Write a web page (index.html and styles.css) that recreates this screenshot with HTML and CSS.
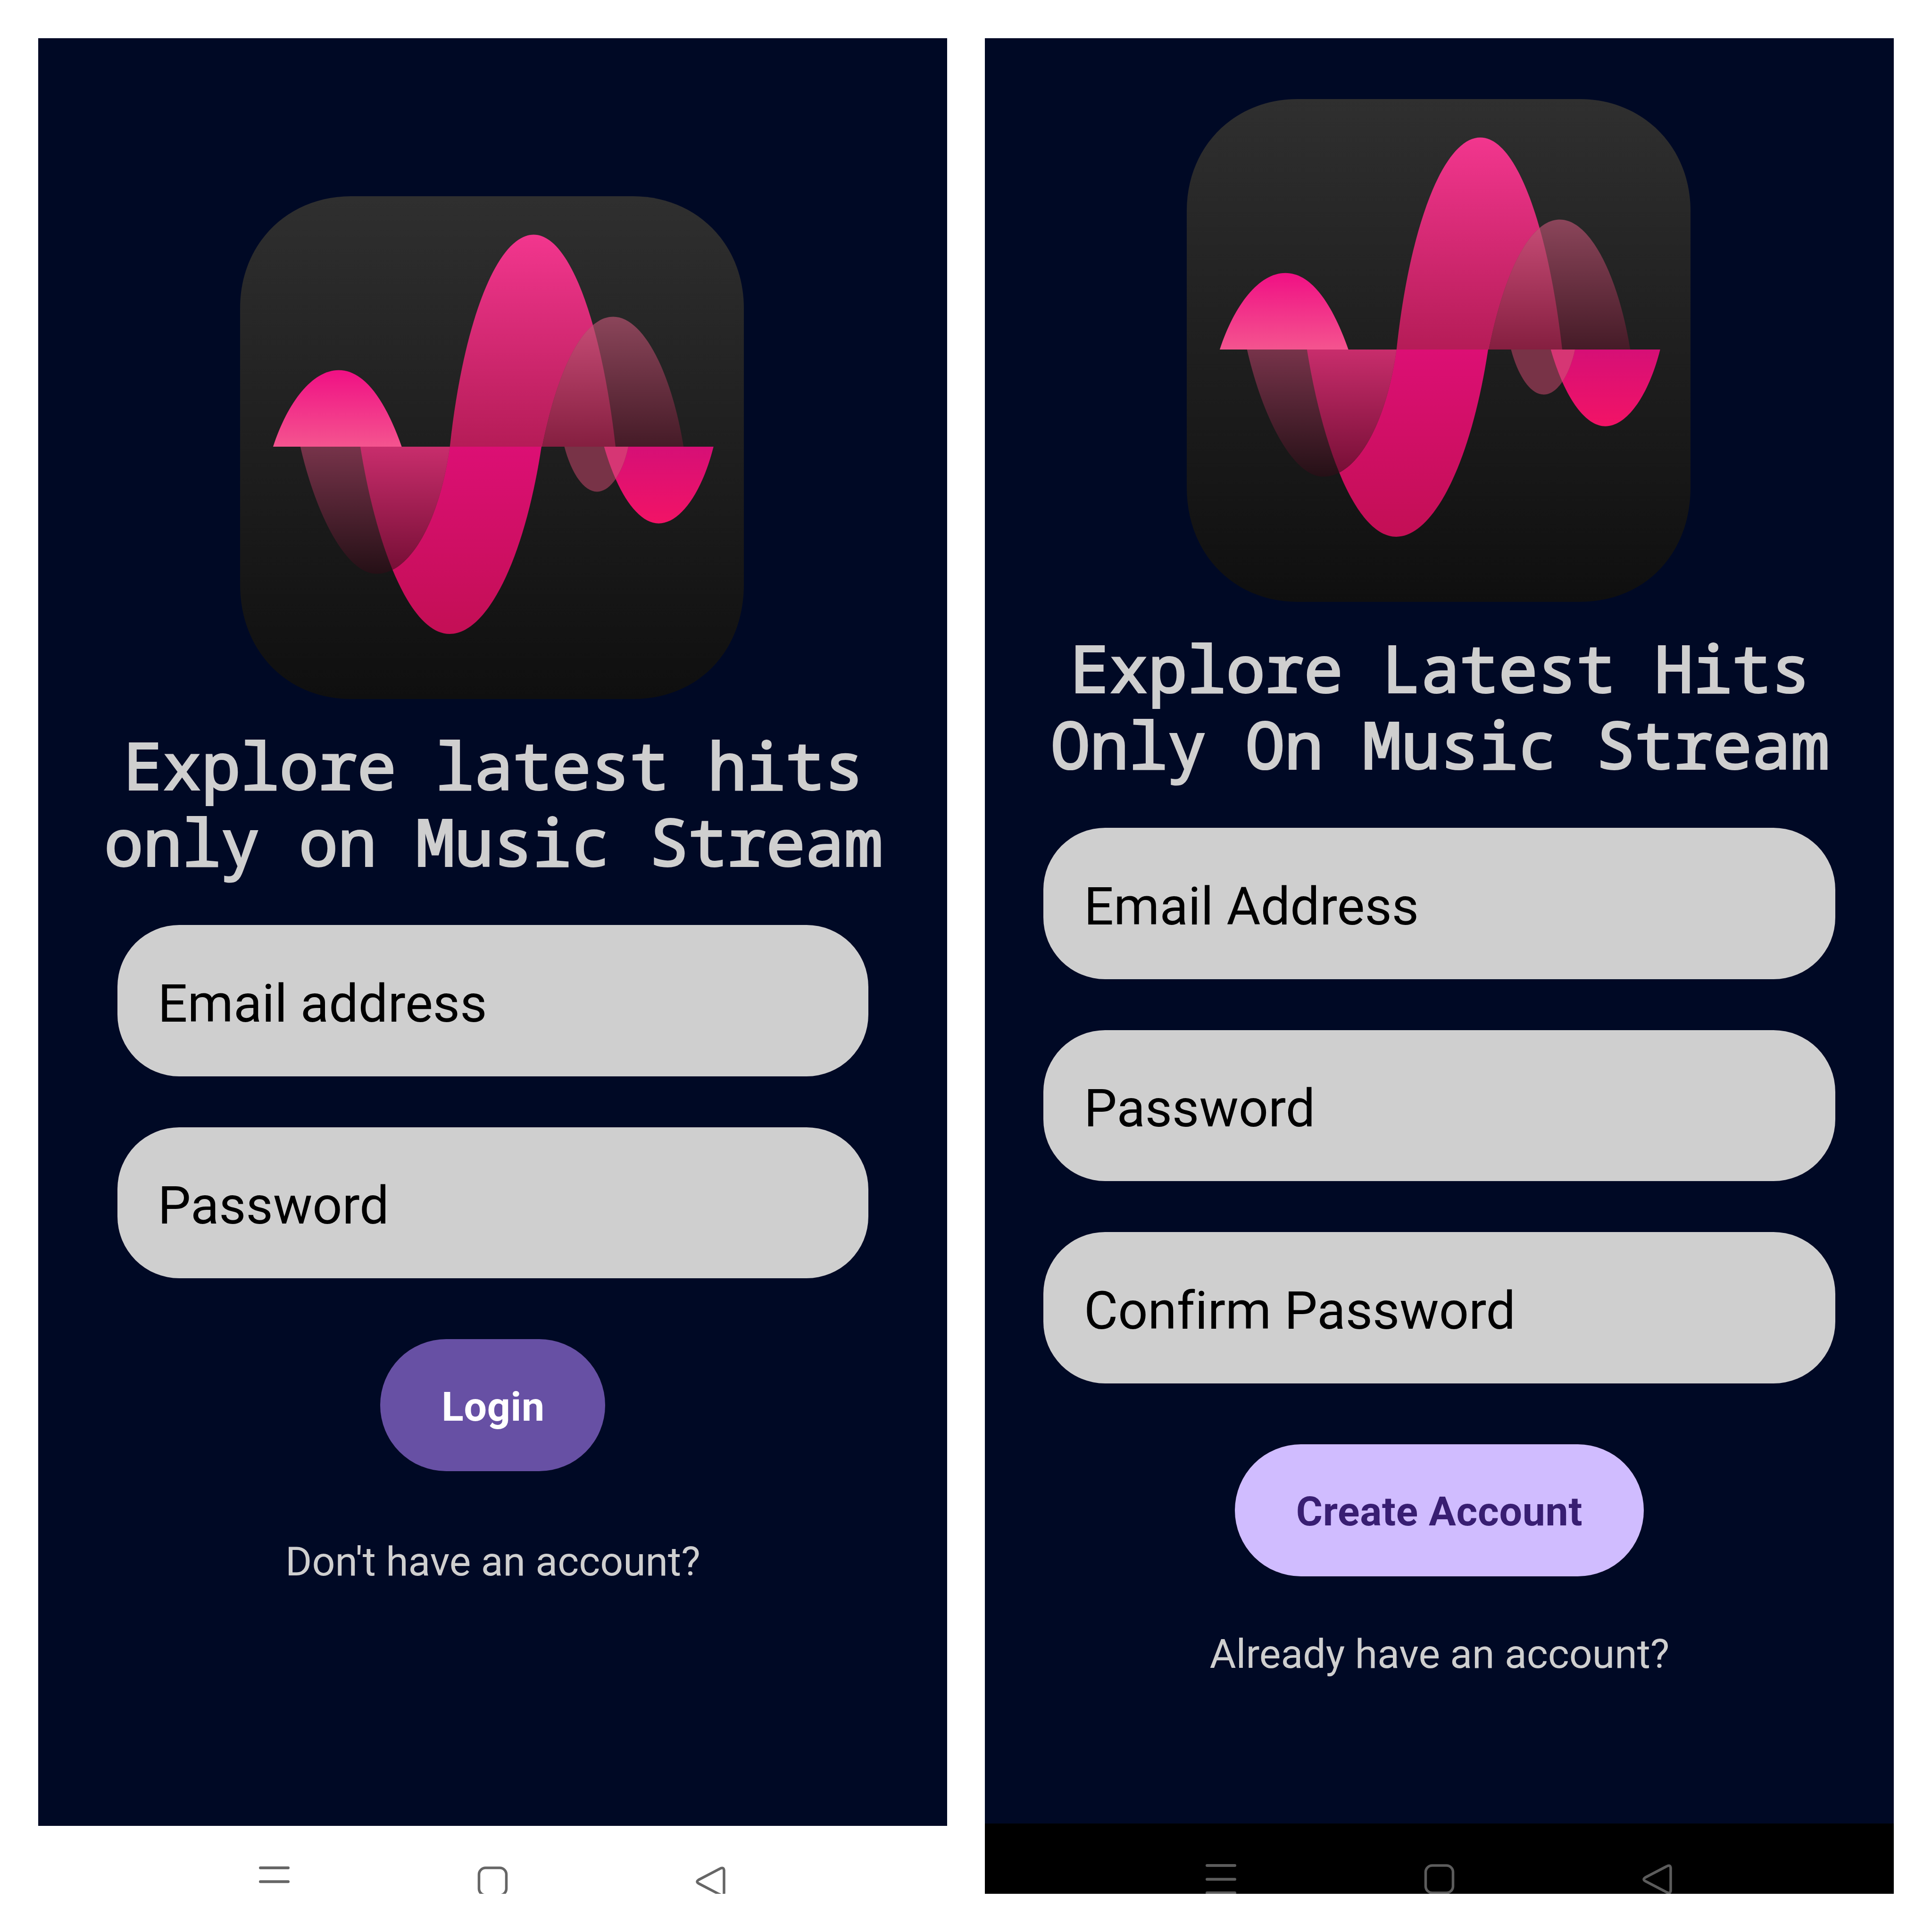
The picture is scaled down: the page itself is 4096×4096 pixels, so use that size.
FILE: index.html
```html
<!DOCTYPE html>
<html lang="en">
<head>
<meta charset="utf-8">
<title>Music Stream</title>
<link rel="stylesheet" href="styles.css">
</head>
<body>
<svg class="defs" aria-hidden="true">
  <defs>
    <linearGradient id="tile" x1="0" y1="0" x2="0" y2="1"><stop offset="0" stop-color="#2f2f2f"/><stop offset="0.45" stop-color="#202020"/><stop offset="1" stop-color="#0f0f0f"/></linearGradient>
    <linearGradient id="hump" x1="0" y1="0" x2="0" y2="1"><stop offset="0" stop-color="#f01084"/><stop offset="1" stop-color="#f4548f"/></linearGradient>
    <linearGradient id="crest" x1="0" y1="0" x2="0" y2="1"><stop offset="0" stop-color="#f2368e"/><stop offset="1" stop-color="#b51c57"/></linearGradient>
    <linearGradient id="trough" x1="0" y1="0" x2="0" y2="1"><stop offset="0" stop-color="#dc0f74"/><stop offset="1" stop-color="#c30f55"/></linearGradient>
    <linearGradient id="shadeDown" x1="0" y1="0" x2="0" y2="1"><stop offset="0" stop-color="#77334a"/><stop offset="1" stop-color="#251016"/></linearGradient>
    <linearGradient id="mixDown" x1="0" y1="0" x2="0" y2="1"><stop offset="0" stop-color="#c82d6c"/><stop offset="1" stop-color="#740e34"/></linearGradient>
    <linearGradient id="shadeUp" x1="0" y1="0" x2="0" y2="1"><stop offset="0" stop-color="#8b455a"/><stop offset="1" stop-color="#451b27"/></linearGradient>
    <linearGradient id="mixUp" x1="0" y1="0" x2="0" y2="1"><stop offset="0" stop-color="#c84d77"/><stop offset="1" stop-color="#851f40"/></linearGradient>
    <linearGradient id="tail" x1="0" y1="0" x2="0" y2="1"><stop offset="0" stop-color="#d60f76"/><stop offset="1" stop-color="#f21366"/></linearGradient>
    <path id="crestPath" d="M663 787C702 420 802 152 912 152C1022 152 1115 430 1155 787Z"/>
    <path id="troughPath" d="M397 787C445 1090 545 1348 662 1348C775 1348 885 1120 935 787Z"/>
    <path id="tailPath" d="M1121 787C1160 925 1221 1017 1283 1017C1345 1017 1410 930 1446 787Z"/>
    <clipPath id="inCrest"><use href="#crestPath"/></clipPath>
    <clipPath id="inTrough"><use href="#troughPath"/></clipPath>
    <clipPath id="inTail"><use href="#tailPath"/></clipPath>
  </defs>
  <symbol id="logo" viewBox="40 37 1496 1506" preserveAspectRatio="none">
    <path fill="url(#tile)" d="M370 37H1206C1395 37 1536 180 1536 372V1200C1536 1400 1400 1543 1206 1543H370C180 1543 40 1400 40 1200V372C40 180 180 37 370 37Z"/>
    <path fill="url(#hump)" d="M138 787C181 655 254 558 333 558C408 558 470 645 520 787Z"/>
    <use href="#crestPath" fill="url(#crest)"/>
    <use href="#troughPath" fill="url(#trough)"/>
    <path fill="url(#shadeDown)" d="M219 787C265 990 355 1168 445 1168C545 1168 632 1010 663 787Z"/>
    <path fill="url(#mixDown)" clip-path="url(#inTrough)" d="M219 787C265 990 355 1168 445 1168C545 1168 632 1010 663 787Z"/>
    <path fill="url(#shadeUp)" d="M937 787C982 560 1058 398 1148 398C1236 398 1320 560 1357 787Z"/>
    <path fill="url(#mixUp)" clip-path="url(#inCrest)" d="M937 787C982 560 1058 398 1148 398C1236 398 1320 560 1357 787Z"/>
    <use href="#tailPath" fill="url(#tail)"/>
    <path fill="#783347" d="M1003 787C1022 860 1058 922 1100 922C1142 922 1178 860 1193 787Z"/>
    <path fill="#d63674" clip-path="url(#inTail)" d="M1003 787C1022 860 1058 922 1100 922C1142 922 1178 860 1193 787Z"/>
  </symbol>
  <symbol id="recents" viewBox="0 0 66 66">
    <path d="M4 4H63M4 33.2H63M4 62H63" fill="none" stroke="currentColor" stroke-width="6" stroke-linecap="round"/>
  </symbol>
  <symbol id="home" viewBox="0 0 66 66">
    <rect x="4.5" y="4" width="58" height="58" rx="14" fill="none" stroke="currentColor" stroke-width="5.5"/>
  </symbol>
  <symbol id="back" viewBox="0 0 66 66">
    <path d="M61 9V57.6Q60 65 51 60L7 37Q1 33.3 7 29.5L51 6.5Q60 1 61 9Z" fill="none" stroke="currentColor" stroke-width="5.5"/>
  </symbol>
</svg>
<main class="board">
  <section class="phone login">
    <div class="screen">
      <svg class="logo"><use href="#logo"/></svg>
      <h1 class="title">Explore latest hits<br>only on Music Stream</h1>
      <form class="form">
        <div class="field">Email address</div>
        <div class="field">Password</div>
      </form>
      <div class="button">Login</div>
      <p class="link">Don't have an account?</p>
    </div>
    <nav class="nav">
      <svg class="nav-icon"><use href="#recents"/></svg>
      <svg class="nav-icon"><use href="#home"/></svg>
      <svg class="nav-icon"><use href="#back"/></svg>
    </nav>
  </section>
  <section class="phone signup">
    <div class="screen">
      <svg class="logo"><use href="#logo"/></svg>
      <h1 class="title">Explore Latest Hits<br>Only On Music Stream</h1>
      <form class="form">
        <div class="field">Email Address</div>
        <div class="field">Password</div>
        <div class="field">Confirm Password</div>
      </form>
      <div class="button">Create Account</div>
      <p class="link">Already have an account?</p>
    </div>
    <nav class="nav">
      <svg class="nav-icon"><use href="#recents"/></svg>
      <svg class="nav-icon"><use href="#home"/></svg>
      <svg class="nav-icon"><use href="#back"/></svg>
    </nav>
  </section>
</main>
</body>
</html>
```
FILE: styles.css
```css
* { box-sizing: border-box; }
body { margin: 0; background: #fff; font-family: Roboto, sans-serif; }
.defs { position: absolute; width: 0; height: 0; }
.board {
  width: 4096px;
  height: 4096px;
  padding: 81px;
  display: grid;
  grid-template-columns: 1927px 1927px;
  gap: 80px;
}
.phone { display: flex; flex-direction: column; height: 3934px; overflow: hidden; }
.screen {
  height: 3790px;
  flex: none;
  background: #000925;
  display: flex;
  flex-direction: column;
  align-items: center;
  padding-top: 335px;
}
.signup .screen { height: 3785px; padding-top: 129px; }
.logo { width: 1068px; height: 1066px; flex: none; margin-right: 3px; }
.title {
  margin: 58px 0 0 4px;
  font: 400 137.6px/161.6px "Noto Sans Mono", "Droid Sans Mono", "DejaVu Sans Mono", monospace;
  -webkit-text-stroke: 4px #cfcfcf;
  color: #cfcfcf;
  text-align: center;
  white-space: nowrap;
}
.form { margin-top: 98px; width: 1592px; display: flex; flex-direction: column; gap: 108px; }
.signup .form { width: 1679px; }
.field {
  height: 320.5px;
  border-radius: 131px;
  background: #cfcfcf;
  color: #000;
  padding: 13px 86px 0;
  font-size: 111px;
  font-variant-ligatures: none;
  display: flex;
  align-items: center;
}
.button {
  margin-top: 129px;
  width: 477px;
  height: 280px;
  border-radius: 140px;
  background: #6750a4;
  color: #fff;
  font-size: 86px;
  font-weight: 700;
  letter-spacing: 0.7px;
  padding: 6px 0 0 2px;
  display: flex;
  align-items: center;
  justify-content: center;
}
.signup .button { width: 867px; padding-left: 0; background: #d0bcff; color: #381e72; }
.link { margin: 137px 0 0 1px; font-size: 86px; line-height: 110px; color: #cfcfcf; }
.signup .link { margin-top: 110px; }
.nav {
  flex: 1;
  min-height: 0;
  padding: 85px 0 0 467px;
  display: flex;
  gap: 397px;
  background: #fff;
  color: #666;
  overflow: hidden;
}
.signup .nav { background: #000; color: #5c5c5c; }
.nav-icon { width: 66px; height: 66px; flex: none; }
```
